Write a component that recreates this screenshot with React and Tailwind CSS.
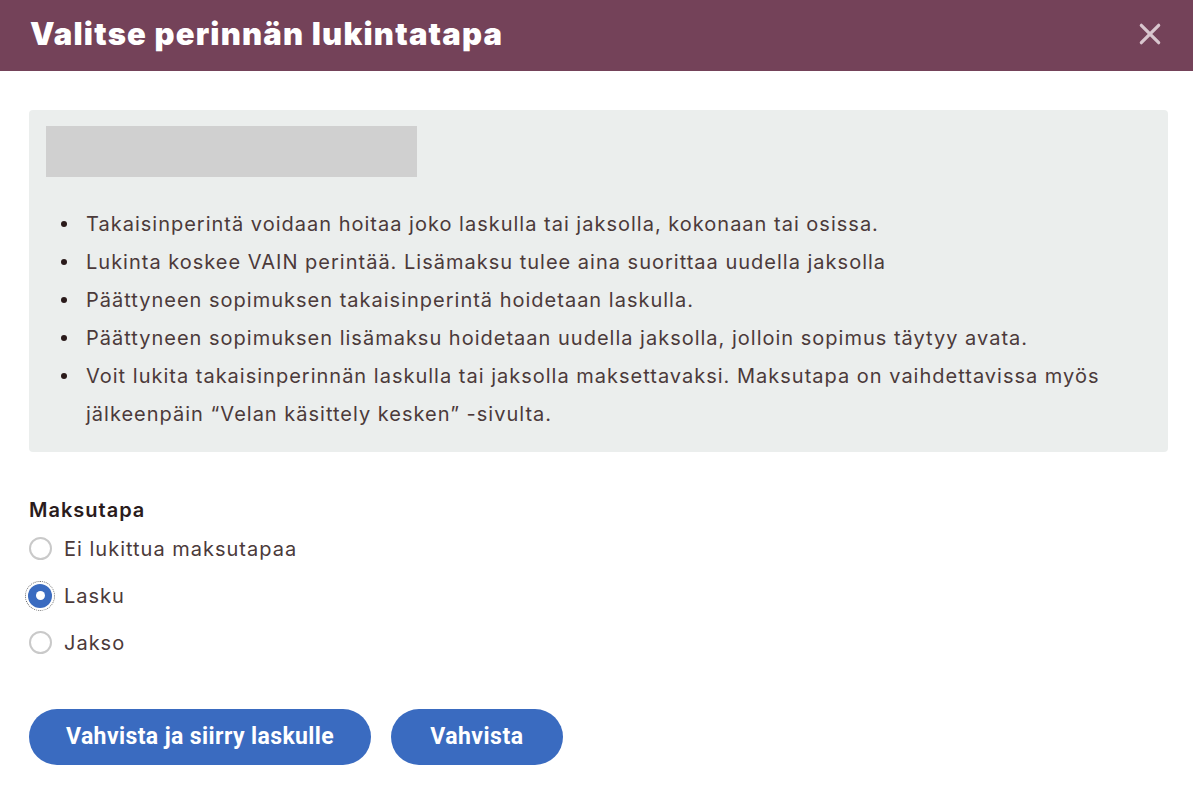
import React from "react";

const bullets = [
  "Takaisinperintä voidaan hoitaa joko laskulla tai jaksolla, kokonaan tai osissa.",
  "Lukinta koskee VAIN perintää. Lisämaksu tulee aina suorittaa uudella jaksolla",
  "Päättyneen sopimuksen takaisinperintä hoidetaan laskulla.",
  "Päättyneen sopimuksen lisämaksu hoidetaan uudella jaksolla, jolloin sopimus täytyy avata.",
  "Voit lukita takaisinperinnän laskulla tai jaksolla maksettavaksi. Maksutapa on vaihdettavissa myös jälkeenpäin “Velan käsittely kesken” -sivulta.",
];

function Radio({ label, checked }) {
  return (
    <label className="flex items-center h-[47px] cursor-pointer">
      {checked ? (
        <span className="w-[30px] h-[30px] -ml-[4px] rounded-full border border-dotted border-[#666] flex items-center justify-center">
          <span className="w-[24px] h-[24px] rounded-full bg-[#3a6bc0] flex items-center justify-center">
            <span className="w-[9px] h-[9px] rounded-full bg-white" />
          </span>
        </span>
      ) : (
        <span className="w-[23px] h-[23px] rounded-full border-2 border-[#c9c9c9] bg-white" />
      )}
      <span className={checked ? "ml-[9px]" : "ml-[12px]"}>{label}</span>
    </label>
  );
}

export default function App() {
  return (
    <div className="w-[1193px] h-[789px] bg-white overflow-hidden font-[Inter,sans-serif]">
      <div className="h-[71px] bg-[#744259] flex items-center justify-between pl-[30px] pr-[30px]">
        <h1 className="text-white text-[31px] font-black tracking-[1.2px] leading-none -mt-[5px]">
          Valitse perinnän lukintatapa
        </h1>
        <svg width="26" height="26" viewBox="0 0 24 24" className="-mt-[4px]">
          <path d="M4 4 L20 20 M20 4 L4 20" stroke="#d8c6ce" strokeWidth="3" strokeLinecap="round" />
        </svg>
      </div>

      <div className="pl-[29px] pr-[25px] pt-[39px]">
        <div className="bg-[#ebeeed] rounded-[4px] pt-[16px] pb-[19px] px-[17px]">
          <div className="w-[371px] h-[51px] bg-[#d0d0d0]" />
          <ul className="mt-[28px] text-[20px] tracking-[1px] leading-[38px] text-[#4b3a3a]">
            {bullets.map((b, i) => (
              <li key={i} className="flex">
                <span className="w-[40px] shrink-0 relative">
                  <span className="absolute left-[15px] top-[16px] w-[6px] h-[6px] rounded-full bg-[#2a1a1a]" />
                </span>
                <span>{b}</span>
              </li>
            ))}
          </ul>
        </div>

        <div className="mt-[46px] text-[#2a1c1c] text-[20px] tracking-[1px] font-semibold leading-[24px]">Maksutapa</div>
        <div className="mt-[3px] text-[20px] tracking-[1px] text-[#4b3a3a]">
          <Radio label="Ei lukittua maksutapaa" />
          <Radio label="Lasku" checked />
          <Radio label="Jakso" />
        </div>

        <div className="mt-[43px] flex gap-[20px] font-[Roboto,sans-serif]">
          <button className="h-[56px] px-[37px] rounded-full bg-[#3a6bc0] text-white text-[23px] font-bold tracking-[0.4px]">
            Vahvista ja siirry laskulle
          </button>
          <button className="h-[56px] px-[39px] rounded-full bg-[#3a6bc0] text-white text-[23px] font-bold tracking-[0.5px]">
            Vahvista
          </button>
        </div>
      </div>
    </div>
  );
}
